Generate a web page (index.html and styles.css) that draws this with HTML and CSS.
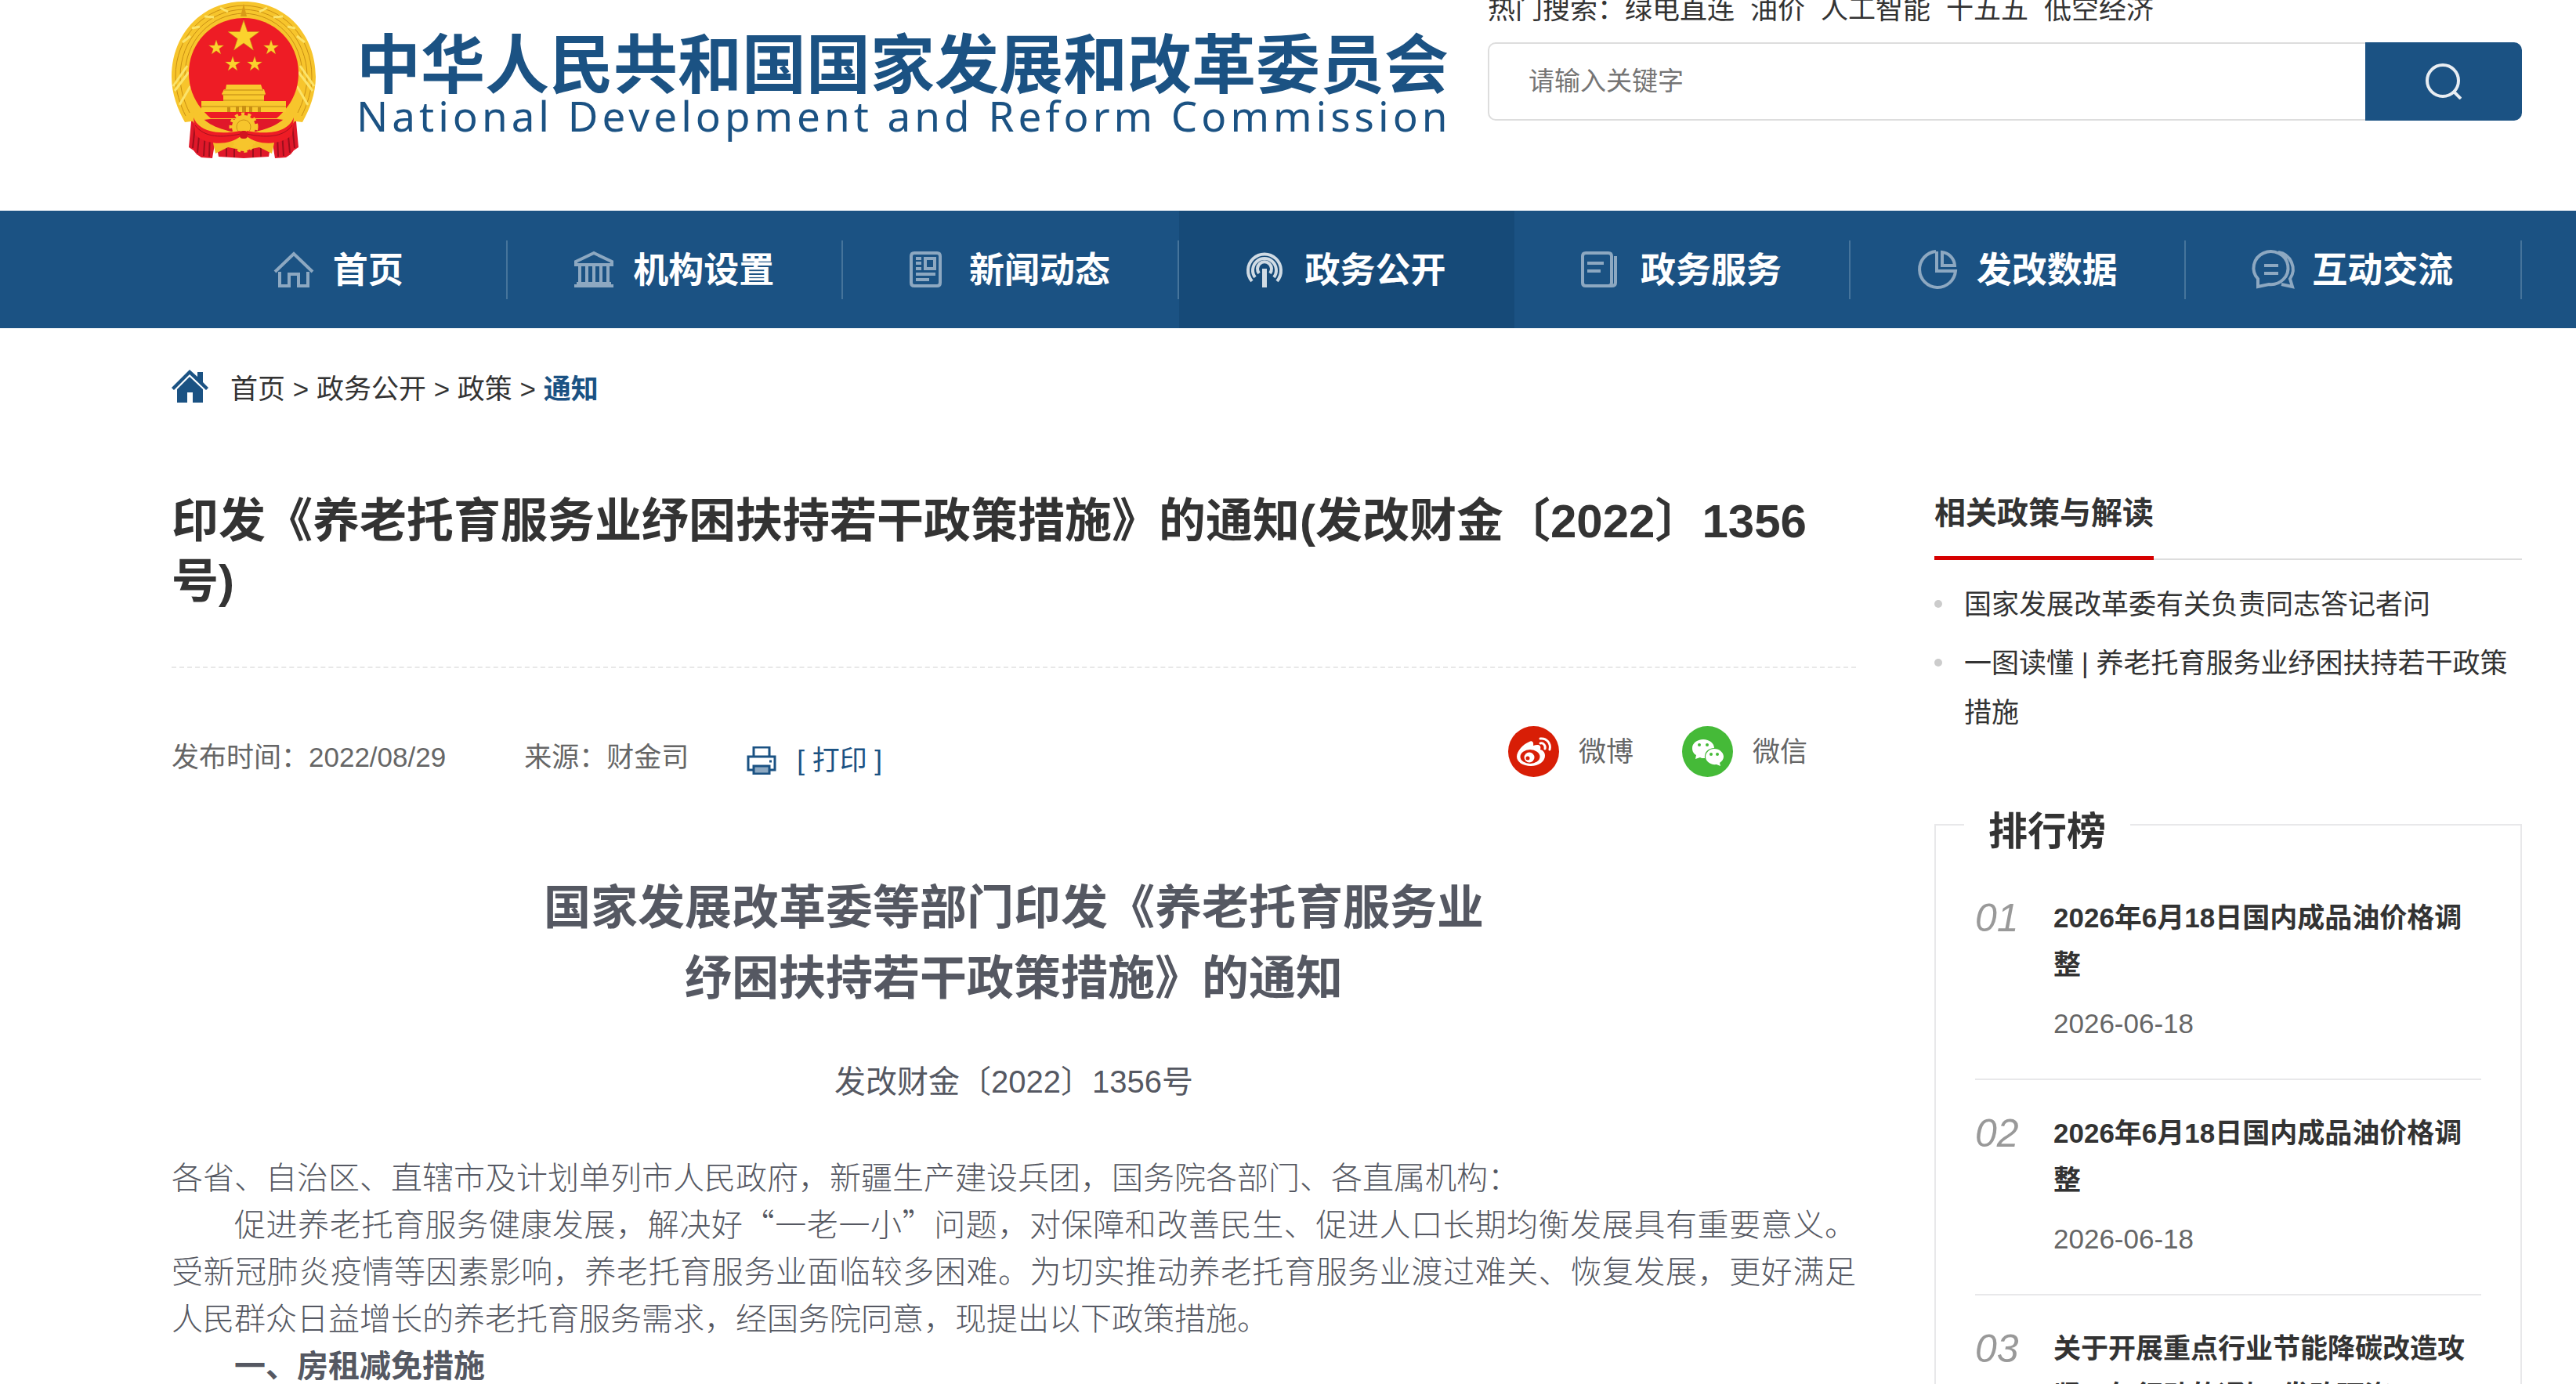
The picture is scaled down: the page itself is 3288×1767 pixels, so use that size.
FILE: index.html
```html
<!DOCTYPE html>
<html lang="zh-CN">
<head>
    <meta charset="UTF-8">
    <meta name="viewport" content="width=device-width, initial-scale=1.0">
    <title>印发《养老托育服务业纾困扶持若干政策措施》的通知</title>
    <link rel="stylesheet" href="styles.css">
</head>
<body>
    <!-- Header -->
    <header class="header wrap">
        <a class="logo" href="#">
            <svg class="emblem" viewBox="0 0 184 200" aria-hidden="true">
                <defs>
                    <path id="star" d="M0-10 2.3-3.1 9.5-3.1 3.7 1.2 5.9 8.1 0 3.8-5.9 8.1-3.7 1.2-9.5-3.1-2.3-3.1Z"/>
                </defs>
                <!-- drapes -->
                <path d="M26 142 22 186 28 190 32 195 38 199 52 200 56 176 60 198 92 200 124 198 128 176 132 200 146 199 152 195 156 190 162 186 158 142Z" fill="#e0182a"/>
                <path d="M30 158 27 187M36 162 33 193M43 166 41 197M49 170 48 198M154 158 157 187M148 162 151 193M141 166 143 197M135 170 136 198M70 184V198M80 188V199M104 188V199M114 184V198" stroke="#9c0f1c" stroke-width="2" fill="none"/>
                <path d="M52 176 66 172H118L132 176 128 194 112 186 92 190 72 186 56 194Z" fill="#f5bd27"/>
                <!-- wheat ring -->
                <path d="M92 0C38 0 0 42 0 96c0 22 8 42 17 58l32-4h86l32 4c9-16 17-36 17-58C184 42 146 0 92 0Z" fill="#f7c52c"/>
                <path d="M92 5C42 6 5 44 5 96c0 18 6 36 13 50M92 10C46 11 11 48 11 96c0 16 5 32 12 46M92 15C50 16 17 50 17 95M92 5c50 1 87 39 87 91 0 18-6 36-13 50M92 10c46 1 81 38 81 86 0 16-5 32-12 46M92 15c42 1 75 35 75 80" stroke="#c98f14" stroke-width="1" fill="none"/>
                <path d="M14 52 24 44M26 34 36 32M42 19 54 20M62 8 72 13M170 52 160 44M158 34 148 32M142 19 130 20M122 8 112 13M2 108 20 82M4 114 22 90M10 132 24 108M182 108 164 82M180 114 162 90M174 132 160 108" stroke="#fbe36b" stroke-width="3" fill="none"/>
                <path d="M92 3 96 19H88Z" fill="#d99a17"/>
                <path d="M92 21c38 0 70 30 70 70 0 28-14 46-28 58H50C36 137 22 119 22 91c0-40 32-70 70-70Z" fill="#ee1c25"/>
                <!-- five stars -->
                <g fill="#fbd22d" stroke="#c98f14" stroke-width=".3">
                    <use href="#star" transform="translate(92 45) scale(2.1)"/>
                    <use href="#star" transform="translate(57 59)"/>
                    <use href="#star" transform="translate(127 59)"/>
                    <use href="#star" transform="translate(78 80)"/>
                    <use href="#star" transform="translate(106 80)"/>
                </g>
                <!-- gate -->
                <path d="M70 106H114L116 112H118L120 118 118 120V127H146V141H38V127H66V120L64 118 67 112H69Z" fill="#f9c92e"/>
                <path d="M67 113H117M65 119H119M66 126H118M38 134H146" stroke="#bd8512" stroke-width="1"/>
                <path d="M71 141v-6h4v6M82 141v-7h4v7M99 141v-7h4v7M110 141v-6h4v6M90 141v-8h5v8" fill="#c98f14"/>
                <!-- lower wheat and gears -->
                <path d="M30 136C42 158 62 162 76 166H108C122 162 142 158 154 136L160 148C150 168 128 176 108 172H76C56 176 34 168 24 148Z" fill="#f7c52c"/>
                <circle cx="92" cy="160" r="15" fill="#f7c52c"/>
                <circle cx="92" cy="160" r="16" fill="none" stroke="#f7c52c" stroke-width="5" stroke-dasharray="4 4"/>
                <circle cx="92" cy="160" r="9" fill="none" stroke="#c98f14"/>
                <circle cx="92" cy="178" r="13" fill="#f7c52c"/>
                <circle cx="92" cy="178" r="13" fill="none" stroke="#f7c52c" stroke-width="4" stroke-dasharray="4 4"/>
                <path d="M28 148C36 168 62 170 88 165V172C74 184 44 184 30 170Z" fill="#ee1c25"/>
                <path d="M156 148C148 168 122 170 96 165V172C110 184 140 184 154 170Z" fill="#ee1c25"/>
                <path d="M30 158C42 174 64 174 88 169M154 158C142 174 120 174 96 169" stroke="#a8101d" stroke-width="1" fill="none"/>
                <rect x="87" y="165" width="10" height="10" rx="4" fill="#d2141f"/>
            </svg>
            <span class="logo-text">
                <span class="logo-cn">中华人民共和国国家发展和改革委员会</span>
                <span class="logo-en">National Development and Reform Commission</span>
            </span>
        </a>
        <div class="search">
            <p class="hot">
                <span>热门搜索：</span>
                <a href="#">绿电直连</a>
                <a href="#">油价</a>
                <a href="#">人工智能</a>
                <a href="#">十五五</a>
                <a href="#">低空经济</a>
            </p>
            <form class="search-form">
                <input type="text" class="search-input" placeholder="请输入关键字" aria-label="请输入关键字">
                <button type="button" class="search-btn" aria-label="搜索">
                    <svg viewBox="0 0 46 46" aria-hidden="true"><circle cx="22" cy="22" r="20"/><path d="M36 36 45 45"/></svg>
                </button>
            </form>
        </div>
    </header>

    <!-- Navigation -->
    <nav class="nav">
        <ul class="nav-list wrap">
            <li><a href="#">
                <svg viewBox="0 0 50 50"><path d="M1 28 25 5 49 28M7 28V46H19V31H31V46H43V28"/></svg>
                <span>首页</span></a></li>
            <li><a href="#">
                <svg viewBox="0 0 50 50"><path d="M25 4 2 15V19H48V15ZM7 19V43M16 19V43M25 19V43M34 19V43M43 19V43M3 43H47M0 46H50"/></svg>
                <span>机构设置</span></a></li>
            <li><a href="#">
                <svg viewBox="0 0 50 50"><path d="M5 4H34Q38 4 38 8V42Q38 46 34 46H5Q1 46 1 42V8Q1 4 5 4ZM7 11H14M7 17H14M7 24H14M19 11H31V24H19ZM7 31H32M7 38H24"/></svg>
                <span>新闻动态</span></a></li>
            <li class="active"><a href="#">
                <svg viewBox="0 0 50 50"><path d="M7 40A21 21 0 1 1 39 40M11 35A15 15 0 1 1 35 35M16 30A9 9 0 1 1 30 30"/><path class="thick" d="M23 24V48"/></svg>
                <span>政务公开</span></a></li>
            <li><a href="#">
                <svg viewBox="0 0 50 50"><path d="M5 4H34Q38 4 38 8V42Q38 46 34 46H5Q1 46 1 42V8Q1 4 5 4ZM7 17H28M7 27H24M43 8V42Q43 46 38 46H34"/></svg>
                <span>政务服务</span></a></li>
            <li><a href="#">
                <svg viewBox="0 0 50 50"><path d="M23 2A23 23 0 1 0 48 27H24V2M31 3V20H47A18 18 0 0 0 31 3Z"/></svg>
                <span>发改数据</span></a></li>
            <li><a href="#">
                <svg viewBox="0 0 50 50"><path d="M6 37A22 21 0 1 1 20 44L6 47ZM32 3A22 22 0 0 1 47 37L50 47 36 44M14 20H32M14 30H32"/></svg>
                <span>互动交流</span></a></li>
        </ul>
    </nav>

    <!-- Breadcrumb -->
    <div class="crumb wrap">
        <svg class="crumb-icon" viewBox="0 0 47 42" aria-hidden="true"><path d="M23 0 33 9V3H40V16L47 23 44 26 23 6 3 26 0 23Z"/><path d="M23 9 40 25V42H27V29H20V42H7V25Z"/></svg>
        <p><a href="#">首页</a> &gt; <a href="#">政务公开</a> &gt; <a href="#">政策</a> &gt; <a class="current" href="#">通知</a></p>
    </div>

    <div class="main wrap">
        <!-- Article -->
        <main class="article">
            <h1>印发《养老托育服务业纾困扶持若干政策措施》的通知(发改财金〔2022〕1356号)</h1>
            <div class="meta">
                <span class="time">发布时间：2022/08/29</span>
                <span class="source">来源：财金司</span>
                <a class="print" href="#">
                    <svg viewBox="0 0 38 36" aria-hidden="true"><path d="M9 13V1H29V13M8 30H2V13H36V30H30M29 19H32"/><path class="paper" d="M9 25H29V35H9Z"/></svg>
                    [ 打印 ]
                </a>
                <div class="share">
                    <a href="#">
                        <svg viewBox="0 0 65 65" aria-hidden="true">
                            <circle cx="32.5" cy="32.5" r="32.5" fill="#d81e06"/>
                            <path d="M27 20c3-2 6 0 5 5 6-2 11-1 9 5 4 1 6 4 6 8 0 7-8 13-18 13S11 46 11 39c0-7 8-16 16-19Z" fill="#fff"/>
                            <ellipse cx="28" cy="39" rx="12.500" ry="9" fill="#d81e06"/>
                            <circle cx="27" cy="40" r="6.500" fill="#fff"/>
                            <circle cx="25" cy="41" r="2.500" fill="#d81e06"/>
                            <path d="M41 16c8-1 14 6 12 14M41 22c4-1 7 3 6 7" stroke="#fff" stroke-width="3" stroke-linecap="round" fill="none"/>
                        </svg>
                        微博
                    </a>
                    <a href="#">
                        <svg viewBox="0 0 65 65" aria-hidden="true">
                            <circle cx="32.5" cy="32.5" r="32.5" fill="#45ba38"/>
                            <path d="M27 17c8 0 14 5 14 11-7 0-13 5-12 13-3 0-5 0-6-1l-6 2 1-5c-4-2-5-6-5-9 0-6 6-11 14-11Z" fill="#fff"/>
                            <path d="M41 29c7 0 12 5 12 10 0 3-2 6-5 8l1 4-5-2c-8 1-14-4-14-10 0-5 5-10 11-10Z" fill="#fff"/>
                            <g fill="#45ba38"><circle cx="22" cy="24" r="2"/><circle cx="32" cy="24" r="2"/><circle cx="37" cy="36" r="2"/><circle cx="45" cy="36" r="2"/></g>
                        </svg>
                        微信
                    </a>
                </div>
            </div>

            <div class="content">
                <h2>国家发展改革委等部门印发《养老托育服务业<br>纾困扶持若干政策措施》的通知</h2>
                <p class="doc-no">发改财金〔2022〕1356号</p>
                <p>各省、自治区、直辖市及计划单列市人民政府，新疆生产建设兵团，国务院各部门、各直属机构：</p>
                <p class="indent">促进养老托育服务健康发展，解决好“一老一小”问题，对保障和改善民生、促进人口长期均衡发展具有重要意义。受新冠肺炎疫情等因素影响，养老托育服务业面临较多困难。为切实推动养老托育服务业渡过难关、恢复发展，更好满足人民群众日益增长的养老托育服务需求，经国务院同意，现提出以下政策措施。</p>
                <p class="indent"><strong>一、房租减免措施</strong></p>
            </div>
        </main>

        <!-- Sidebar -->
        <aside class="side">
            <div class="side-head"><h2>相关政策与解读</h2></div>
            <ul class="related">
                <li><a href="#">国家发展改革委有关负责同志答记者问</a></li>
                <li><a href="#">一图读懂 | 养老托育服务业纾困扶持若干政策措施</a></li>
            </ul>
            <section class="rank">
                <h2>排行榜</h2>
                <ol>
                    <li>
                        <em>01</em>
                        <div>
                            <a href="#">2026年6月18日国内成品油价格调整</a>
                            <time>2026-06-18</time>
                        </div>
                    </li>
                    <li>
                        <em>02</em>
                        <div>
                            <a href="#">2026年6月18日国内成品油价格调整</a>
                            <time>2026-06-18</time>
                        </div>
                    </li>
                    <li>
                        <em>03</em>
                        <div>
                            <a href="#">关于开展重点行业节能降碳改造攻坚三年行动的通知(发改环资</a>
                        </div>
                    </li>
                </ol>
            </section>
        </aside>
    </div>
</body>
</html>
```
FILE: styles.css
```css
* {
    box-sizing: border-box;
    margin: 0;
    padding: 0;
}

body {
    font-family: "Liberation Sans", "Noto Sans CJK SC", sans-serif;
    font-size: 35px;
    color: #333;
    background: #fff;
}

a {
    color: inherit;
    text-decoration: none;
}

ul, ol {
    list-style: none;
}

.wrap {
    padding-left: 219px;
    padding-right: 69px;
}

/* Header */
.header {
    display: flex;
    justify-content: space-between;
    height: 269px;
}

.logo {
    display: flex;
    gap: 52px;
    padding-top: 2px;
    color: #1b5283;
}

.emblem {
    width: 184px;
    height: 200px;
}

.logo-text {
    display: flex;
    flex-direction: column;
    padding-top: 43px;
    white-space: nowrap;
}

.logo-cn {
    font-size: 82px;
    font-weight: bold;
    line-height: 78px;
}

.logo-en {
    font-family: "Noto Sans", "Open Sans", sans-serif;
    font-size: 53px;
    line-height: 50px;
    letter-spacing: 5px;
}

.search {
    width: 1320px;
}

.hot {
    display: flex;
    gap: 20px;
    line-height: 24px;
    margin-bottom: 30px;
}

.hot span {
    margin-right: -20px;
}

.search-form {
    display: flex;
    height: 100px;
}

.search-input {
    flex: 1;
    border: 2px solid #ddd;
    border-right: 0;
    border-radius: 10px 0 0 10px;
    padding: 0 50px;
    font: inherit;
    font-size: 33px;
}

.search-input::placeholder {
    color: #757575;
}

.search-btn {
    width: 200px;
    border: 0;
    border-radius: 0 10px 10px 0;
    background: #1b5283;
    cursor: pointer;
}

.search-btn svg {
    display: block;
    width: 46px;
    height: 46px;
    margin: 0 auto;
    fill: none;
    stroke: #e8edf2;
    stroke-width: 4;
}

/* Navigation */
.nav {
    background: #1b5283;
}

.nav-list {
    display: flex;
}

.nav-list li {
    flex: 1;
    display: flex;
    align-items: center;
    height: 150px;
}

.nav-list a {
    flex: 1;
    display: flex;
    align-items: center;
    justify-content: center;
    gap: 25px;
    height: 75px;
    border-right: 2px solid #46749b;
    color: #fff;
    font-size: 45px;
    font-weight: bold;
}

.nav-list span {
    padding-bottom: 5px;
}

.nav-list .active {
    background: #164a78;
}

.nav-list .active a {
    border-color: transparent;
}

.nav-list svg {
    width: 50px;
    height: 50px;
    fill: none;
    stroke: #8da8c1;
    stroke-width: 4;
    overflow: visible;
}

.nav-list .active svg {
    stroke: #d0dbe4;
}

.nav-list .thick {
    stroke-width: 6;
}

/* Breadcrumb */
.crumb {
    display: flex;
    align-items: center;
    gap: 28px;
    height: 148px;
}

.crumb-icon {
    width: 47px;
    height: 42px;
    fill: #1b5283;
}

.current {
    color: #1b5283;
    font-weight: bold;
}

/* Two columns */
.main {
    display: flex;
    gap: 100px;
    padding-top: 60px;
}

.article {
    flex: 1;
}

.article h1 {
    padding: 0 60px 70px 0;
    border-bottom: 2px dashed #e8e8e8;
    font-size: 60px;
    line-height: 77px;
}

.meta {
    display: flex;
    align-items: flex-start;
    padding: 74px 62px 0 0;
    line-height: 80px;
    color: #666;
}

.source {
    margin-left: 100px;
}

.print {
    display: flex;
    align-items: center;
    gap: 26px;
    margin-left: 74px;
    line-height: 88px;
    color: #1b5283;
}

.print svg {
    width: 38px;
    height: 36px;
    fill: none;
    stroke: #1b5283;
    stroke-width: 3;
}

.print .paper {
    fill: #8da8c1;
}

.share {
    display: flex;
    gap: 62px;
    margin-left: auto;
    line-height: 65px;
}

.share a {
    display: flex;
    gap: 25px;
}

.share svg {
    width: 65px;
    height: 65px;
}

/* Article text */
.content {
    padding-top: 94px;
    color: #555862;
    font-size: 40px;
    line-height: 60px;
    font-family: "Noto Sans CJK SC", sans-serif;
    font-weight: 300;
    text-align: justify;
}

.content h2 {
    font-size: 60px;
    line-height: 90px;
    text-align: center;
}

.content .doc-no {
    margin: 62px 0 60px;
    font-family: "Liberation Sans", "Noto Sans CJK SC", sans-serif;
    font-weight: normal;
    text-align: center;
}

.content strong {
    font-weight: 700;
}

.indent {
    text-indent: 2em;
}

/* Sidebar */
.side {
    width: 750px;
}

.side-head {
    display: flex;
    border-bottom: 2px solid #ddd;
}

.side-head h2 {
    height: 88px;
    margin-bottom: -2px;
    border-bottom: 5px solid #d60000;
    font-size: 40px;
    line-height: 56px;
}

.related {
    padding-top: 25px;
    line-height: 63px;
}

.related li {
    display: flex;
    gap: 28px;
    margin-bottom: 12px;
}

.related li::before {
    content: "";
    flex: none;
    width: 10px;
    height: 10px;
    margin-top: 26px;
    border-radius: 50%;
    background: #ccc;
}

.rank {
    margin-top: 111px;
    padding: 0 50px;
    border: 2px solid #e8e8ea;
}

.rank h2 {
    width: 212px;
    margin: -22px 0 12px -14px;
    background: #fff;
    font-size: 50px;
    line-height: 60px;
    text-align: center;
}

.rank li {
    display: flex;
    padding: 38px 0 40px;
    border-bottom: 2px solid #e8e8ea;
    line-height: 60px;
}

.rank em {
    width: 100px;
    font-size: 50px;
    color: #999;
}

.rank div {
    flex: 1;
}

.rank a {
    font-weight: bold;
}

.rank time {
    display: block;
    margin-top: 15px;
    color: #666;
}
```
